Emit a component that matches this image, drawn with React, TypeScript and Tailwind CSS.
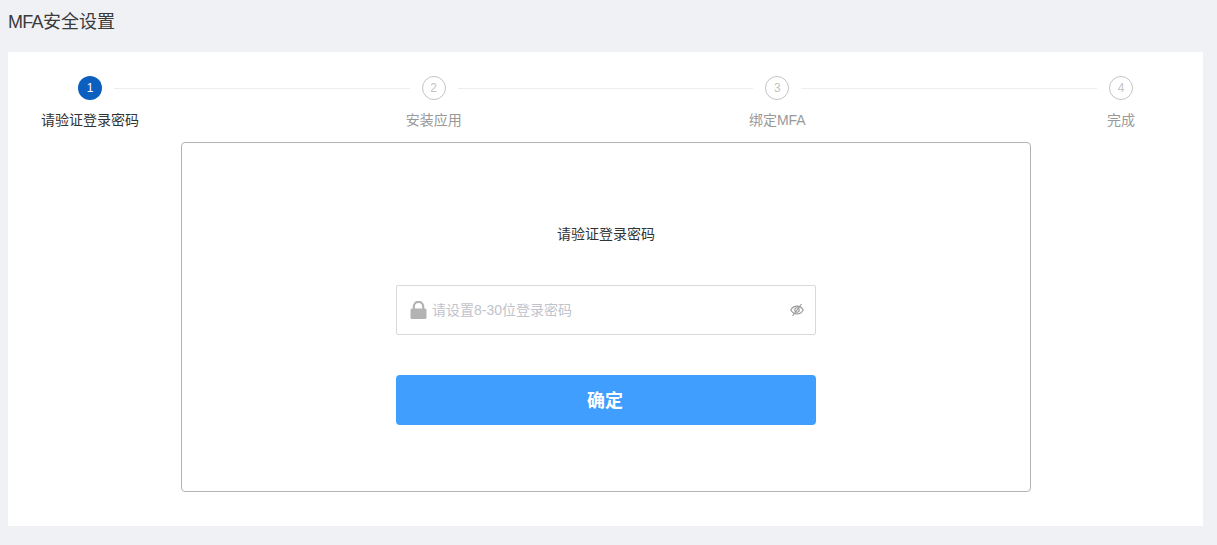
import React from 'react';

const STEPS = ['请验证登录密码', '安装应用', '绑定MFA', '完成'];

const StepCircle: React.FC<{ n: number; active: boolean }> = ({ n, active }) => (
  <div
    className={`w-6 h-6 shrink-0 rounded-full flex items-center justify-center text-[12px] ${
      active ? 'bg-[#0b5fbf] text-white' : 'border border-[#c4c4c4] text-[#c4c4c4]'
    }`}
  >
    {n}
  </div>
);

const App: React.FC = () => {
  return (
    <div className="h-[545px] bg-[#f0f1f5] px-2 font-['Liberation_Sans','Noto_Sans_CJK_SC',sans-serif] overflow-hidden">
      <div className="h-[52px] pt-[10px] text-[18px] leading-[24px] text-[#3a3a3a]">
        <span className="tracking-[-0.7px]">MFA</span>安全设置
      </div>

      <div className="w-[1195px] h-[474px] bg-white pt-6">
        {/* Stepper */}
        <div className="flex items-center px-[70px]">
          {STEPS.map((_, i) => (
            <React.Fragment key={i}>
              <StepCircle n={i + 1} active={i === 0} />
              {i < STEPS.length - 1 && <div className="flex-1 h-px bg-[#eeeeee] mx-3" />}
            </React.Fragment>
          ))}
        </div>
        <div className="flex justify-between px-[33px] mt-[9px]">
          {STEPS.map((label, i) => (
            <div
              key={label}
              className={`w-[98px] text-center text-[14px] leading-[22px] whitespace-nowrap ${
                i === 0 ? 'text-[#333]' : 'text-[#999]'
              }`}
            >
              {label}
            </div>
          ))}
        </div>

        {/* Password card */}
        <div className="w-[850px] h-[350px] ml-[173px] mt-[11px] border border-[#b4b4b4] rounded-[4px] flex flex-col items-center">
          <div className="mt-[80px] text-[14px] leading-[22px] text-[#333]">请验证登录密码</div>
          <div className="mt-[40px] w-[420px] h-[50px] border border-[#d9d9d9] rounded-[2px] flex items-center pl-[13px] pr-[11px]">
            <svg width="17" height="18" viewBox="0 0 17 18" className="shrink-0">
              <path d="M3.800 8V5.500a4.700 4.700 0 0 1 9.400 0V8" fill="none" stroke="#b3b3b3" strokeWidth="2.200" />
              <rect x="0.500" y="7.500" width="16" height="10.500" rx="1.500" fill="#b3b3b3" />
            </svg>
            <span className="ml-[5px] flex-1 text-[14px] text-[#c0c4cc]">请设置8-30位登录密码</span>
            <svg width="14" height="14" viewBox="0 0 14 14" fill="none" stroke="#999999" strokeWidth="1.100">
              <path d="M0.700 7c1.500-2.600 3.600-3.900 6.300-3.900S11.800 4.400 13.300 7c-1.500 2.600-3.600 3.900-6.300 3.900S2.200 9.600.7 7z" />
              <circle cx="7" cy="7" r="2.200" />
              <path d="M11.500 1 2.500 13" />
            </svg>
          </div>
          <button className="mt-[40px] w-[420px] h-[50px] pt-[2px] pr-[2px] bg-[#409eff] rounded-[4px] text-white text-[18px] font-bold">
            确定
          </button>
        </div>
      </div>
    </div>
  );
};

export default App;
